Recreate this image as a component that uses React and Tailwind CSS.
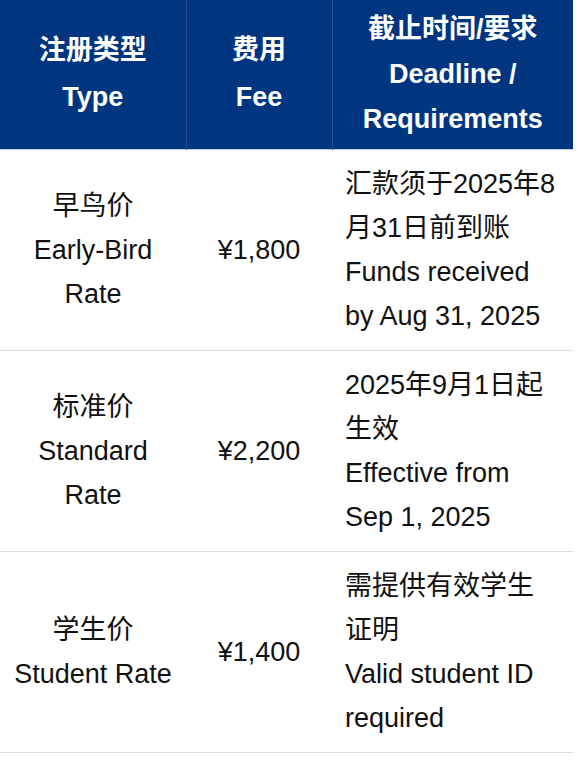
const rows = [
  {
    type: ["早鸟价", "Early-Bird", "Rate"],
    fee: "¥1,800",
    note: ["汇款须于2025年8", "月31日前到账", "Funds received", "by Aug 31, 2025"],
  },
  {
    type: ["标准价", "Standard", "Rate"],
    fee: "¥2,200",
    note: ["2025年9月1日起", "生效", "Effective from", "Sep 1, 2025"],
  },
  {
    type: ["学生价", "Student Rate"],
    fee: "¥1,400",
    note: ["需提供有效学生", "证明", "Valid student ID", "required"],
  },
];

const font = {
  fontFamily: '"Liberation Sans", "Noto Sans CJK SC", sans-serif',
};

export default function App() {
  return (
    <div className="bg-white w-[580px] h-[762px]" style={font}>
      <table className="w-[573px] border-collapse table-fixed text-[27px] leading-[44px] text-[#111]">
        <colgroup>
          <col className="w-[186px]" />
          <col className="w-[146px]" />
          <col className="w-[241px]" />
        </colgroup>
        <thead>
          <tr className="bg-[#003580] text-white font-bold border-b border-[#c3cfe6]">
            <th className="h-[149px] border-r border-[#24508f] text-center font-bold leading-[47px]">
              <div>注册类型</div>
              <div>Type</div>
            </th>
            <th className="border-r border-[#24508f] text-center font-bold leading-[47px]">
              <div>费用</div>
              <div>Fee</div>
            </th>
            <th className="text-center font-bold leading-[45px]">
              <div>截止时间/要求</div>
              <div>Deadline /</div>
              <div>Requirements</div>
            </th>
          </tr>
        </thead>
        <tbody>
          {rows.map((r) => (
            <tr key={r.fee} className="border-b border-[#dedede]">
              <td className="h-[201px] text-center align-middle">
                {r.type.map((t) => (
                  <div key={t} className="whitespace-nowrap">
                    {t}
                  </div>
                ))}
              </td>
              <td className="text-center align-middle whitespace-nowrap">{r.fee}</td>
              <td className="pl-[13px] align-middle">
                {r.note.map((t) => (
                  <div key={t} className="whitespace-nowrap">
                    {t}
                  </div>
                ))}
              </td>
            </tr>
          ))}
        </tbody>
      </table>
    </div>
  );
}
